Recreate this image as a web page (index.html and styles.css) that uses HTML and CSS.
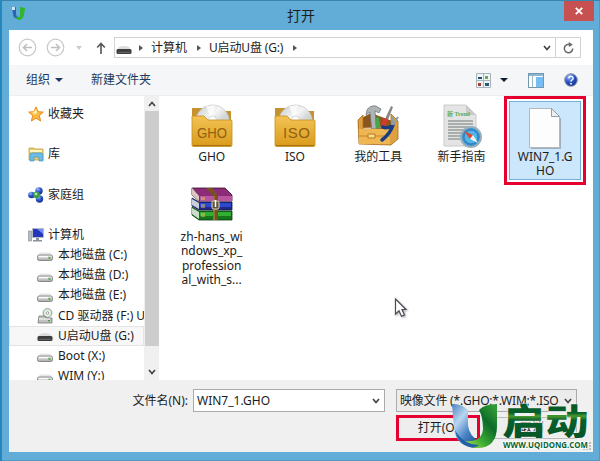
FILE: index.html
```html
<!DOCTYPE html>
<html lang="zh-CN">
<head>
  <meta charset="UTF-8">
  <title>打开</title>
  <link rel="stylesheet" href="styles.css">
</head>
<body>
  <!-- shared icons -->
  <svg class="defs" width="0" height="0">
    <defs>
      <linearGradient id="gold" x1="0" y1="0" x2="0" y2="1">
        <stop offset="0" stop-color="#f3c355"/><stop offset="1" stop-color="#d99b1c"/>
      </linearGradient>
      <linearGradient id="disc" x1="0" y1="0" x2="1" y2="1">
        <stop offset="0" stop-color="#c4c7c9"/><stop offset=".4" stop-color="#f6f6f6"/><stop offset=".6" stop-color="#d3d6d6"/><stop offset="1" stop-color="#a9e0cf"/>
      </linearGradient>
      <linearGradient id="metal" x1="0" y1="0" x2="0" y2="1">
        <stop offset="0" stop-color="#f1f1f1"/><stop offset="1" stop-color="#a6a6a6"/>
      </linearGradient>
      <radialGradient id="blueball" cx=".35" cy=".25" r=".8">
        <stop offset="0" stop-color="#9bc0ff"/><stop offset=".5" stop-color="#2c55c8"/><stop offset="1" stop-color="#16308c"/>
      </radialGradient>
    </defs>
    <symbol id="drive" viewBox="0 0 16 12">
      <path d="M3 2.500h10l2.500 3.500h-15z" fill="#e6e6e6"/>
      <rect x=".5" y="5" width="15" height="5.500" rx="1.800" fill="url(#metal)" stroke="#777" stroke-width=".8"/>
      <path d="M2 6.700h9" stroke="#fff"/>
      <rect x="11.500" y="7" width="2" height="2" fill="#5cae4b"/>
    </symbol>
    <symbol id="usb" viewBox="0 0 16 12">
      <path d="M3 3q5-2 10 0l2.500 3h-15z" fill="#dcdcdc"/>
      <rect x=".5" y="5" width="15" height="5" rx="1.500" fill="#3c3c3c"/>
      <path d="M2 8.300h12" stroke="#777" stroke-width=".8"/>
    </symbol>
    <symbol id="folder" viewBox="0 0 42 44">
      <path d="M1 4h10l3 3h26v20H1z" fill="#c6922f"/>
      <circle cx="21.500" cy="18" r="17" fill="url(#disc)" stroke="#bbb" stroke-width=".6"/>
      <path d="M21 18L15 2l9-1z" fill="#fff" opacity=".7"/>
      <circle cx="21.500" cy="16" r="4" fill="#fff" stroke="#bbb" stroke-width=".6"/>
      <path d="M1 12h12l4 4h23q1 0 1 1v24q0 1.500-1.500 1.500h-37Q1 42.500 1 41z" fill="url(#gold)" stroke="#c48f22" stroke-width=".8"/>
      <path d="M2 41.500h38" stroke="#a87409"/>
    </symbol>
    <symbol id="chev" viewBox="0 0 8 6"><path d="M1 1l3 3.500L7 1" fill="none" stroke="#444" stroke-width="1.700"/></symbol>
  </svg>

  <div class="window">
    <div class="titlebar">
      <svg class="app-icon" width="13" height="13" viewBox="0 0 13 13">
        <path d="M0 1l4-1v7q0 2 2 3l2 2Q1 12.500 1 7z" fill="#2c64b4"/><path d="M8 0l5 1-1 7q-1 5-6 5l-4-3q6 2 6-3z" fill="#30b52d"/><path d="M0 0h3v3H0z" fill="#d3e5f5"/>
      </svg>
      <span class="title">打开</span>
      <div class="close"><svg width="8" height="8" viewBox="0 0 8 8"><path d="M.8.8l6.400 6.400M7.200.8L.8 7.200" stroke="#fff" stroke-width="1.800"/></svg></div>
    </div>

    <div class="client">
      <div class="navbar">
        <svg class="round" width="19" height="19" viewBox="0 0 19 19"><circle cx="9.500" cy="9.500" r="8.300" fill="none" stroke="#c8c8c8" stroke-width="1.200"/><path d="M14 9.500H5.500M9 6L5.500 9.500 9 13" fill="none" stroke="#c0c0c0" stroke-width="1.600"/></svg>
        <svg class="round next" width="19" height="19" viewBox="0 0 19 19"><circle cx="9.500" cy="9.500" r="8.300" fill="none" stroke="#c8c8c8" stroke-width="1.200"/><path d="M5 9.500h8.500M10 6l3.500 3.500L10 13" fill="none" stroke="#c0c0c0" stroke-width="1.600"/></svg>
        <svg class="recent" width="6" height="4" viewBox="0 0 6 4"><path d="M0 0h6L3 4z" fill="#ccc"/></svg>
        <svg class="up" width="10" height="12" viewBox="0 0 10 12"><path d="M5 12V2M1.200 5.500L5 1.500l3.800 4" fill="none" stroke="#555" stroke-width="1.600"/></svg>
        <div class="address">
          <svg class="usb" width="16" height="12"><use href="#usb"/></svg>
          <i class="arrow"></i><span class="crumb-pc">计算机</span>
          <i class="arrow"></i><span class="crumb-u">U启动U盘 (G:)</span>
          <i class="arrow"></i>
          <svg class="drop" width="8" height="6"><use href="#chev"/></svg>
          <div class="refresh"><svg width="11" height="12" viewBox="0 0 11 12"><path d="M7 2.600A4.200 4.200 0 1 0 9.700 6.500" fill="none" stroke="#666" stroke-width="1.500"/><path d="M5.800 0v5l4-2.200z" fill="#666"/></svg></div>
        </div>
      </div>

      <div class="toolbar">
        <span>组织</span><i class="caret"></i>
        <span class="newdir">新建文件夹</span>
        <svg class="views" width="15" height="15" viewBox="0 0 15 15">
          <rect width="15" height="15" rx="1" fill="#a9b3ba"/>
          <path d="M1 1h6v6H1zM8 1h6v6H8zM1 8h6v6H1zM8 8h6v6H8z" fill="#eef5f8"/>
          <path d="M2 4h4v2H2z" fill="#24506d"/><path d="M9 3h3v3H9z" fill="#6daa4e"/><path d="M2 10h3v3H2z" fill="#a63e2d"/><path d="M9 10h4v3H9z" fill="#2b5878"/>
        </svg>
        <i class="caret dark"></i>
        <svg class="pane" width="16" height="15" viewBox="0 0 16 15"><rect x=".5" y=".5" width="15" height="14" fill="#fff" stroke="#7397ad"/><path d="M1 2h14" stroke="#8bb6d2" stroke-width="2"/><path d="M4.500 3v11" stroke="#9eb8c8"/><rect x="8" y="4" width="7" height="10" fill="#75bdf2"/></svg>
        <svg class="help" width="14" height="14" viewBox="0 0 14 14"><circle cx="7" cy="7" r="6.300" fill="url(#blueball)" stroke="#8a97a8"/><path d="M4.800 5.300Q5 3.300 7 3.300t2.200 1.900Q9.200 6.300 8 7T7 8.700" fill="none" stroke="#fff" stroke-width="1.400"/><circle cx="7" cy="10.700" r=".9" fill="#fff"/></svg>
      </div>

      <div class="main">
        <div class="tree">
          <div class="group"><svg width="16" height="16" viewBox="0 0 16 16"><path d="M8 .8l2.100 4.900 5.200.4-4 3.500 1.300 5.400L8 12.200 3.400 15l1.300-5.400-4-3.500 5.200-.4z" fill="#fcb83f" stroke="#e88a20"/><path d="M8 3l1.300 4L5 9l1-2-3-1 3-.2z" fill="#fff0a5"/></svg><span>收藏夹</span></div>
          <div class="group"><svg width="16" height="16" viewBox="0 0 16 16"><path d="M1 2h5l1 1h8v11H1z" fill="#e5cc70" stroke="#c3a447" stroke-width=".8"/><path d="M2 5h12" stroke="#fff4bd" stroke-width="2"/><path d="M2 15V9q0-2 2-2h9q2 0 2 2v6h-4v-4H6v4z" fill="#6ebce4" stroke="#4295c6" stroke-width=".7"/></svg><span>库</span></div>
          <div class="group"><svg width="16" height="16" viewBox="0 0 16 16"><circle cx="11" cy="4" r="3.700" fill="url(#blueball)"/><circle cx="3.500" cy="8" r="3.300" fill="url(#blueball)"/><circle cx="11.500" cy="12" r="3.700" fill="url(#blueball)"/><circle cx="8.500" cy="8" r="3.300" fill="#3ca044"/><circle cx="8" cy="7" r="1.300" fill="#b9edaa"/></svg><span>家庭组</span></div>
          <div class="group pc"><svg width="16" height="16" viewBox="0 0 16 16"><path d="M.5 4h3v10h-3z" fill="#b8bec6" stroke="#7f8690" stroke-width=".6"/><path d="M4.500 1.500h11v9h-11z" fill="#2436ba" stroke="#b5bcc8"/><path d="M9 2l6 0v5z" fill="#768cf0"/><path d="M8 11h3v2h3v1.500H5V13h3z" fill="#8a929d"/></svg><span>计算机</span></div>
          <div class="item"><svg width="16" height="12"><use href="#drive"/></svg><span>本地磁盘 (C:)</span></div>
          <div class="item"><svg width="16" height="12"><use href="#drive"/></svg><span>本地磁盘 (D:)</span></div>
          <div class="item"><svg width="16" height="12"><use href="#drive"/></svg><span>本地磁盘 (E:)</span></div>
          <div class="item"><svg class="cd" width="16" height="16" viewBox="0 0 16 16"><circle cx="10.500" cy="5" r="4.400" fill="#e1eee1" stroke="#8d9c8d"/><circle cx="10.500" cy="5" r="1.300" fill="#fff" stroke="#888" stroke-width=".7"/><path d="M2 8h6l1 2h6v5H1z" fill="#bfc1c0" stroke="#777" stroke-width=".8"/><path d="M2 11h11" stroke="#fff"/><path d="M11 12h2v1.500h-2z" fill="#4ea24a"/></svg><span>CD 驱动器 (F:) U</span></div>
          <div class="item selected"><svg width="16" height="12"><use href="#usb"/></svg><span>U启动U盘 (G:)</span></div>
          <div class="item"><svg width="16" height="12"><use href="#drive"/></svg><span>Boot (X:)</span></div>
          <div class="item"><svg width="16" height="12"><use href="#drive"/></svg><span>WIM (Y:)</span></div>
        </div>
        <div class="scrollbar">
          <svg class="flip" width="8" height="6"><use href="#chev"/></svg>
          <div class="thumb"></div>
          <svg width="8" height="6"><use href="#chev"/></svg>
        </div>

        <div class="files">
          <div class="file">
            <svg width="42" height="44" viewBox="0 0 42 44"><use href="#folder"/><text x="6" y="34" class="tag" textLength="30" lengthAdjust="spacingAndGlyphs">GHO</text></svg>
            <span>GHO</span>
          </div>
          <div class="file">
            <svg width="42" height="44" viewBox="0 0 42 44"><use href="#folder"/><text x="9" y="34" class="tag" textLength="27">ISO</text></svg>
            <span>ISO</span>
          </div>
          <div class="file">
            <svg width="42" height="44" viewBox="0 0 42 44">
              <path d="M1 16l13-7 24 9v5L1 24z" fill="#8a561e"/>
              <path d="M10 6q3-5 9-4l5 3-2 4-4-2 2 22h-5L13 8l-4 3z" fill="#aeb4b5" stroke="#697073" stroke-width=".7"/>
              <path d="M18 14l4-1 2 15h-5z" fill="#48a548"/>
              <path d="M34 2l2 1-5 13-3-1z" fill="#888"/><path d="M26 14l5 1-4 13-4-2z" fill="#d23b2d"/>
              <path d="M1 16l5-5v14h28V10l7 7v18l-7 6-32-1z" fill="#dfa13f" stroke="#a86b1d" stroke-width=".8"/>
              <path d="M2 25h31v15H2z" fill="#efb654"/><path d="M2 32h31" stroke="#c5822a"/>
              <path d="M11 30h7v4h-7z" fill="#f8dc83" stroke="#b77b25"/>
              <path d="M36 21q-3 9-11 15M35 22q-6 3-9 1" fill="none" stroke="#173d83" stroke-width="3.500" stroke-linecap="round"/>
              <path d="M41 13l-5 8M36 13l-1 8" fill="none" stroke="#8e9ca5" stroke-width="2"/>
            </svg>
            <span>我的工具</span>
          </div>
          <div class="file">
            <svg width="42" height="44" viewBox="0 0 42 44">
              <path d="M3 1h22l10 10v31H3z" fill="#e3e4e3" stroke="#c9cac9"/><path d="M25 1v10h10z" fill="#c9cac9"/>
              <text x="6" y="12" class="green">新 Trend</text>
              <path d="M7 17h25M7 20h25M7 23h25M7 26h17M7 29h14M7 32h13M7 35h13" stroke="#979a9b" stroke-width="1.600"/>
              <circle cx="30" cy="33" r="10" fill="#3b91cf" stroke="#9aafbc" stroke-width="2"/>
              <circle cx="30" cy="33" r="7" fill="#51b6e9" stroke="#267aba"/>
              <path d="M23 27l9 4-3 4z" fill="#d94b32"/><path d="M37 39l-8-4 3-4z" fill="#f4f4f4"/>
            </svg>
            <span>新手指南</span>
          </div>
          <div class="file marked">
            <div class="pick">
              <svg width="42" height="42" viewBox="0 0 42 42"><path d="M5.500 1.500h22l8 8v31h-30z" fill="#fdfdfd" stroke="#b3b8bd"/><path d="M27.500 1.500v8h8z" fill="#ecf0f3" stroke="#969ca2"/><path d="M36.500 11v30.500H7" fill="none" stroke="#8b969f" stroke-width=".7"/></svg>
              <span>WIN7_1.G<br>HO</span>
            </div>
          </div>
          <div class="file rar">
            <svg width="42" height="34" viewBox="0 0 42 34">
              <path d="M1 1h33l7 7v6H8L1 8z" fill="#8c2c78" stroke="#36102d" stroke-width=".8"/>
              <path d="M1 1l7 8v5L1 8z" fill="#d9c9bd"/><path d="M9 9h32v5H9z" fill="#b9569f"/>
              <path d="M1 11l7 4h33v8H8l-7-4z" fill="#202985" stroke="#111545" stroke-width=".8"/>
              <path d="M1 12l7 4v6l-7-4z" fill="#c9ced8"/><path d="M9 16h31v4H9z" fill="#2e49cf"/>
              <path d="M1 20l7 4h33v9H8l-7-5z" fill="#15751b" stroke="#093b0e" stroke-width=".8"/>
              <path d="M1 21l7 4v7l-7-5z" fill="#cddbcb"/><path d="M9 25h31v4H9z" fill="#32ae32"/>
              <path d="M15 1h6l6 8v24h-5V9z" fill="#765122"/><path d="M23 9v24" stroke="#c19448"/>
              <rect x="21" y="14" width="7" height="8" rx="1.500" fill="#5d5642" stroke="#ded9bf"/><path d="M24.500 13v7" stroke="#fff" stroke-width="1.500"/>
              <path d="M11 10v3M13 10v3M11 17v4M13 17v4M11 26v4M13 26v4" stroke="#e2c357"/>
            </svg>
            <span>zh-hans_wi<br>ndows_xp_<br>profession<br>al_with_s...</span>
          </div>
          <svg class="cursor" width="15" height="20" viewBox="0 0 15 20"><path d="M1.500 1v15l3.500-3.300 2.500 5.500 3-1.300L8 11.500h4z" fill="#fff" stroke="#4b4d58" stroke-width="1.200"/></svg>
        </div>
      </div>

      <div class="footer">
        <div class="row">
          <label>文件名(N):</label>
          <div class="combo name"><span>WIN7_1.GHO</span><svg width="8" height="6"><use href="#chev"/></svg></div>
          <div class="combo type"><span>映像文件 (*.GHO;*.WIM;*.ISO</span><svg width="8" height="6"><use href="#chev"/></svg></div>
        </div>
        <div class="row buttons">
          <div class="btn open">打开(O)</div>
          <div class="btn cancel">取消</div>
        </div>
      </div>
    </div>

    <!-- resize grip -->
    <svg class="grip" width="8" height="8" viewBox="0 0 8 8"><path d="M6 0h2v2H6zM3 3h2v2H3zM6 3h2v2H6zM0 6h2v2H0zM3 6h2v2H3zM6 6h2v2H6z" fill="#bdbdbd"/></svg>

    <!-- site logo over the corner of the dialog -->
    <svg class="logo" width="142" height="54" viewBox="0 0 142 54">
      <defs>
        <linearGradient id="ublue" x1="0" y1="0" x2=".8" y2="1"><stop offset="0" stop-color="#4a82c2"/><stop offset=".35" stop-color="#b9d6ef"/><stop offset=".65" stop-color="#4b86c8"/><stop offset="1" stop-color="#174c8c"/></linearGradient>
        <linearGradient id="ugreen" x1="0" y1="1" x2=".8" y2="0"><stop offset="0" stop-color="#c5e64a"/><stop offset=".35" stop-color="#3fae35"/><stop offset=".7" stop-color="#0c6b2a"/><stop offset="1" stop-color="#2f9a35"/></linearGradient>
        <linearGradient id="word" x1="0" y1="0" x2="0" y2="1"><stop offset="0" stop-color="#064f26"/><stop offset=".38" stop-color="#07602c"/><stop offset=".44" stop-color="#4c9a2c"/><stop offset=".52" stop-color="#07602c"/><stop offset="1" stop-color="#064f26"/></linearGradient>
      </defs>
      <path d="M0 3q9-1 16 6v15q1 11 12 17l-2 6Q4 47 2 27z" fill="url(#ublue)"/>
      <path d="M27 9q5-6 18-6v22q0 22-20 22-9 0-14-7 19 2 20-12 0-12-4-19z" fill="url(#ugreen)"/>
      <path d="M3 29q7 14 24 15-3 3-9 2Q5 42 3 29z" fill="#2160a4"/>
      <g transform="translate(50 34) scale(1.140 .95)"><text class="brand" x="0" y="0">启动</text></g>
      <text class="url" x="51" y="47" textLength="85" lengthAdjust="spacingAndGlyphs">WWW.UQIDONG.COM</text>
    </svg>
  </div>
</body>
</html>
```
FILE: styles.css
```css
* {
  box-sizing: border-box;
}

body {
  margin: 0;
  overflow: hidden;
  font: 12px/16px "Noto Sans", "Noto Sans CJK SC", sans-serif;
  color: #1c1c1c;
}

svg {
  display: block;
  flex: none;
}

.defs {
  position: absolute;
}

.window {
  position: relative;
  width: 600px;
  height: 461px;
  padding: 0 7px 0 9px;
  background: #62add7;
  border-top: 1px solid #3585ae;
  box-shadow: inset 2px 0 #2587bd, inset 0 -1px #4f9bc6, inset -1px 0 #4c9bc8;
}

.titlebar {
  display: flex;
  align-items: flex-start;
  height: 29px;
}

.app-icon {
  margin: 6px 0 0 3px;
}

.title {
  flex: 1;
  padding: 5px 0 0 13px;
  text-align: center;
  font-size: 14px;
  line-height: 19px;
}

.close {
  display: flex;
  align-items: center;
  justify-content: center;
  width: 30px;
  height: 20px;
  margin-right: -1px;
  background: #c75050;
}

.client {
  height: 422px;
  background: #fff;
  display: flex;
  flex-direction: column;
}

.navbar {
  display: flex;
  align-items: center;
  height: 35px;
  padding-left: 9px;
}

.next {
  margin-left: 9px;
}

.recent {
  margin-left: 11px;
}

.up {
  margin: 0 8px 0 14px;
}

.address {
  display: flex;
  align-items: center;
  flex: 1;
  height: 21px;
  margin-right: 12px;
  padding-left: 1px;
  border: 1px solid #d2d2d2;
}

.arrow {
  border: 3px solid transparent;
  border-left: 4px solid #555;
  border-right: 0;
}

.usb {
  margin: 4px 7px 0 0;
}

.crumb-pc {
  width: 35px;
  margin: 0 11px 0 8px;
  white-space: nowrap;
}

.crumb-u {
  width: 75px;
  margin: 0 9px 0 8px;
  white-space: nowrap;
  letter-spacing: -.15px;
}

.drop {
  margin: 0 4px 0 auto;
}

.refresh {
  width: 25px;
  height: 19px;
  border-left: 1px solid #d2d2d2;
  display: flex;
  align-items: center;
  justify-content: center;
}

.toolbar {
  display: flex;
  align-items: center;
  height: 31px;
  padding: 0 15px 0 17px;
  background: #f5f6f7;
  border-bottom: 1px solid #eceef0;
  color: #1e395b;
}

.caret {
  margin-left: 5px;
  border: 4px solid transparent;
  border-top-color: #1e395b;
  border-bottom: 0;
}

.newdir {
  margin-left: 28px;
}

.views {
  margin-left: auto;
}

.dark {
  margin-left: 9px;
  border-top-color: #101c35;
}

.pane {
  margin: 0 20px;
}

.main {
  display: flex;
  height: 284px;
  overflow: hidden;
}

.tree {
  width: 135px;
  padding-top: 8px;
  overflow: hidden;
  white-space: nowrap;
}

.group {
  display: flex;
  align-items: center;
  height: 20px;
  margin-bottom: 20.300px;
  padding-left: 19px;
  gap: 4px;
}

.pc {
  margin-bottom: 0;
}

.item {
  display: flex;
  align-items: center;
  height: 20.200px;
  padding-left: 28px;
  gap: 5px;
}

.item svg {
  margin-top: 3px;
}

.item .cd {
  margin-top: 0;
}

.selected {
  background: #f7f7f7;
  outline: 1px solid #e4e4e4;
  outline-offset: -1px;
}

.scrollbar {
  width: 15px;
  background: #f0f0f0;
  display: flex;
  flex-direction: column;
  align-items: center;
}

.scrollbar svg {
  margin-top: 23px;
}

.scrollbar .flip {
  margin: 5px 0 4px;
  transform: scaleY(-1);
}

.thumb {
  width: 14px;
  height: 235px;
  background: #cdcdcd;
}

.files {
  position: relative;
  flex: 1;
  display: grid;
  grid-template-columns: repeat(5, 83.300px);
  grid-template-rows: 91px auto;
  padding-left: 11px;
  align-content: start;
}

.file {
  display: flex;
  flex-direction: column;
  align-items: center;
  padding-top: 8px;
  text-align: center;
  line-height: 14.300px;
}

.file span {
  margin-top: 2px;
}

.file.rar {
  padding-top: 0;
}

.file.rar span {
  margin-top: 9px;
}

.tag {
  font: 15px "Liberation Sans", sans-serif;
  fill: #916012;
}

.green {
  font: bold 6px "Liberation Serif", "Noto Sans CJK SC", serif;
  fill: #58ad63;
}

.file.marked {
  width: 82px;
  height: 89px;
  margin-left: 1px;
  padding: 2px;
  border: 3px solid #e4002f;
}

.pick {
  width: 72px;
  height: 80px;
  padding-top: 5px;
  background: #cce6fb;
  border: 1px solid #74afd9;
  display: flex;
  flex-direction: column;
  align-items: center;
}

.pick span {
  margin-top: 1px;
}

.cursor {
  position: absolute;
  left: 235px;
  top: 202px;
  filter: drop-shadow(1px 1px 1px #aaa);
}

.footer {
  flex: 1;
  background: #f0f0f0;
  padding-top: 9px;
}

.row {
  display: flex;
  align-items: center;
}

label {
  width: 184px;
  padding-right: 5px;
  text-align: right;
}

.combo {
  display: flex;
  align-items: center;
  height: 23px;
  padding: 0 4px 0 3px;
  border: 1px solid #ababab;
  white-space: nowrap;
}

.combo span {
  flex: 1;
}

.name {
  width: 192px;
  background: #fff;
}

.type {
  width: 181px;
  margin-left: 11px;
  background: #ececec;
  letter-spacing: -.2px;
}

.buttons {
  margin-top: 3px;
  padding-left: 387px;
}

.btn {
  width: 84px;
  height: 26px;
  line-height: 20px;
  text-align: center;
  background: #eee;
}

.open {
  border: 3px solid #e4002f;
}

.cancel {
  width: 90px;
  height: 22px;
  margin-left: 7px;
  border: 1px solid #bbb;
}

.grip {
  position: absolute;
  right: 9px;
  bottom: 11px;
}

.logo {
  position: absolute;
  left: 452px;
  top: 400px;
}

.brand {
  font: 900 38px "Noto Sans CJK SC", sans-serif;
  fill: url(#word);
  stroke: #f4f4f4;
  stroke-width: 1px;
  paint-order: stroke;
}

.url {
  font: bold 9px "Open Sans", "Noto Sans", sans-serif;
  fill: #08632f;
  stroke: #fff;
  stroke-width: 1.500px;
  paint-order: stroke;
}
```
